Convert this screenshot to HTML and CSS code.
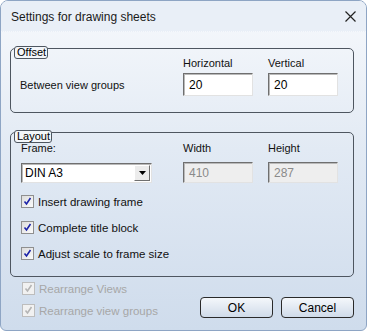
FILE: index.html
```html
<!DOCTYPE html>
<html lang="en">
<head>
    <meta charset="UTF-8">
    <title>Settings for drawing sheets</title>
    <link rel="stylesheet" href="styles.css">
</head>
<body>

    <div class="window">

        <!-- Title Bar -->
        <div class="titlebar">
            <span class="title">Settings for drawing sheets</span>
            <svg class="close" width="11" height="11" viewBox="0 0 11 11">
                <path d="M0.5 0.5 L10.5 10.5 M10.5 0.5 L0.5 10.5" stroke="#222" stroke-width="1.2" fill="none"/>
            </svg>
        </div>

        <div class="content">

            <!-- Offset Group -->
            <div class="group offset">
                <span class="legend">Offset</span>
                <div class="offset-grid">
                    <span></span>
                    <span class="col-label">Horizontal</span>
                    <span class="col-label">Vertical</span>
                    <span class="row-label">Between view groups</span>
                    <div class="field">20</div>
                    <div class="field">20</div>
                </div>
            </div>

            <!-- Layout Group -->
            <div class="group layout">
                <span class="legend">Layout</span>
                <div class="layout-grid">
                    <span class="col-label">Frame:</span>
                    <span class="col-label">Width</span>
                    <span class="col-label">Height</span>
                    <div class="combo">
                        <span>DIN A3</span>
                        <span class="combo-btn">
                            <svg width="7" height="4" viewBox="0 0 7 4"><path d="M0 0 H7 L3.5 4 Z" fill="#000"/></svg>
                        </span>
                    </div>
                    <div class="field disabled">410</div>
                    <div class="field disabled">287</div>
                </div>

                <div class="checks">
                    <label class="check"><span class="box"><svg width="9" height="9" viewBox="0 0 9 9"><path d="M1.5 4.5 L3.5 7 L7.5 1" stroke="#1c23a8" stroke-width="1.6" fill="none"/></svg></span>Insert drawing frame</label>
                    <label class="check"><span class="box"><svg width="9" height="9" viewBox="0 0 9 9"><path d="M1.5 4.5 L3.5 7 L7.5 1" stroke="#1c23a8" stroke-width="1.6" fill="none"/></svg></span>Complete title block</label>
                    <label class="check"><span class="box"><svg width="9" height="9" viewBox="0 0 9 9"><path d="M1.5 4.5 L3.5 7 L7.5 1" stroke="#1c23a8" stroke-width="1.6" fill="none"/></svg></span>Adjust scale to frame size</label>
                </div>
            </div>

            <!-- Footer -->
            <div class="footer">
                <div class="footer-checks">
                    <label class="check off"><span class="box"><svg width="9" height="9" viewBox="0 0 9 9"><path d="M1.5 4.5 L3.5 7 L7.5 1" stroke="#b4b4b4" stroke-width="1.6" fill="none"/></svg></span>Rearrange Views</label>
                    <label class="check off"><span class="box"><svg width="9" height="9" viewBox="0 0 9 9"><path d="M1.5 4.5 L3.5 7 L7.5 1" stroke="#b4b4b4" stroke-width="1.6" fill="none"/></svg></span>Rearrange view groups</label>
                </div>
                <div class="buttons">
                    <button class="btn">OK</button>
                    <button class="btn">Cancel</button>
                </div>
            </div>

        </div>
    </div>

</body>
</html>
```

FILE: styles.css
```css
/* Basic Reset */
* {
    margin: 0;
    padding: 0;
    box-sizing: border-box;
}

body {
    font-family: 'Liberation Sans', Arial, sans-serif;
    font-size: 11px;
    color: #111;
    background: #ffffff;
}

/* Window Frame */
.window {
    width: 367px;
    height: 331px;
    border: 1px solid #8ea5c4;
    border-radius: 8px 8px 6px 6px;
    overflow: hidden;
    display: flex;
    flex-direction: column;
    background: linear-gradient(to bottom, #f7f9fc 0%, #e2eaf4 45%, #cfdcec 100%);
}

/* Title Bar */
.titlebar {
    height: 31px;
    flex-shrink: 0;
    display: flex;
    align-items: center;
    justify-content: space-between;
    padding: 0 10px;
    background: #e9eff7;
    border-bottom: 1px dotted #f6f8fb;
}

.title {
    font-size: 12px;
    color: #1a1a1a;
    margin-top: 1px;
}

.close {
    margin-top: 1px;
}

/* Content */
.content {
    flex: 1;
    padding: 16px 12px 0 9px;
    display: flex;
    flex-direction: column;
}

/* Group Boxes */
.group {
    position: relative;
    border: 1px solid #4e5660;
    border-radius: 5px;
}

.legend {
    position: absolute;
    left: 3px;
    top: -3px;
    line-height: 11px;
    padding: 0 1px 0 2px;
    border: 1px solid #4e5660;
    border-radius: 3px;
    background: #f3f6fa;
    color: #000;
}

.offset {
    height: 65px;
    padding: 7px 0 0 9px;
}

.offset-grid {
    display: grid;
    grid-template-columns: 148px 70px 70px;
    column-gap: 15px;
    grid-template-rows: 13px 23px;
    row-gap: 4px;
    align-items: center;
}

.col-label {
    color: #111;
}

.field {
    height: 23px;
    background: #ffffff;
    border: 1px solid;
    border-color: #6f6f6f #e2e2e2 #e2e2e2 #6f6f6f;
    box-shadow: inset 1px 1px 0 #b9b9b9;
    padding: 4px 0 0 5px;
    font-size: 12px;
    color: #000;
}

.field.disabled {
    height: 21px;
    background: #eeeeee;
    color: #8a8a8a;
    padding-top: 3px;
}

/* Layout Group */
.layout {
    margin-top: 19px;
    height: 145px;
    padding: 8px 0 0 10px;
}

.layout-grid {
    display: grid;
    grid-template-columns: 162px 85px 70px;
    grid-template-rows: 13px 21px;
    row-gap: 8px;
    align-items: center;
}

.layout-grid .field {
    width: 70px;
}

.combo {
    width: 131px;
    height: 20px;
    display: flex;
    align-items: center;
    justify-content: space-between;
    background: #ffffff;
    border: 1px solid;
    border-color: #6f6f6f #e2e2e2 #e2e2e2 #6f6f6f;
    box-shadow: inset 1px 1px 0 #b9b9b9;
    padding: 1px 1px 1px 3px;
    font-size: 12px;
    color: #000;
}

.combo-btn {
    width: 16px;
    height: 16px;
    display: flex;
    align-items: center;
    justify-content: center;
    background: #ececec;
    border: 1px solid;
    border-color: #ffffff #6f6f6f #6f6f6f #ffffff;
}

/* Checkboxes */
.checks {
    margin-top: 12px;
    display: flex;
    flex-direction: column;
    gap: 13px;
}

.check {
    display: flex;
    align-items: center;
    height: 13px;
    font-size: 11.5px;
    color: #111;
}

.box {
    width: 13px;
    height: 13px;
    margin-right: 4px;
    display: flex;
    align-items: center;
    justify-content: center;
    border: 1px solid #8f8f8f;
    background: linear-gradient(to bottom right, #dcdcdc, #fbfbfb);
}

.check.off {
    color: #a7a7a7;
}

.check.off .box {
    border-color: #bdbdbd;
    background: #f1f1f1;
}

/* Footer */
.footer {
    display: flex;
    justify-content: space-between;
    padding: 5px 0 0 12px;
}

.footer-checks {
    display: flex;
    flex-direction: column;
    gap: 9px;
}

.buttons {
    display: flex;
    gap: 8px;
    margin-top: 15px;
}

.btn {
    width: 73px;
    height: 21px;
    font-family: 'Liberation Sans', Arial, sans-serif;
    font-size: 12px;
    color: #000;
    border: 1px solid #2a2a2a;
    border-radius: 4px;
    background: linear-gradient(to bottom, #f4f7fb 0%, #e2e9f2 50%, #cfdbe9 100%);
}
```
